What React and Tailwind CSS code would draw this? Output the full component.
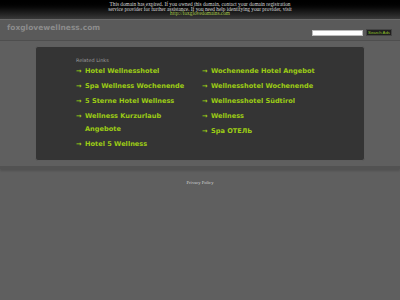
import React from "react";

const leftLinks = [
  ["Hotel Wellnesshotel"],
  ["Spa Wellness Wochenende"],
  ["5 Sterne Hotel Wellness"],
  ["Wellness Kurzurlaub", "Angebote"],
  ["Hotel 5 Wellness"],
];

const rightLinks = [
  ["Wochenende Hotel Angebot"],
  ["Wellnesshotel Wochenende"],
  ["Wellnesshotel Südtirol"],
  ["Wellness"],
  ["Spa ОТЕЛЬ"],
];

const LinkItem = ({ lines }) => (
  <div className="flex py-px leading-[13px]">
    <span className="w-[9px] shrink-0">→</span>
    <span>
      {lines.map((l, i) => (
        <div key={i}>{l}</div>
      ))}
    </span>
  </div>
);

const App = () => {
  return (
    <div className="w-[400px] h-[300px] overflow-hidden bg-[#5f5f5f] font-['DejaVu_Sans',sans-serif]">
      {/* expired notice */}
      <div className="h-[20px] bg-gradient-to-b from-[#000000] via-[#111111] to-[#3a3a3a] border-b border-[#6a6a6a] pt-[2px] text-center font-['Liberation_Serif',serif] text-[5.3px] leading-[4.7px] text-[#d8d8d8]">
        <div>This domain has expired. If you owned this domain, contact your domain registration</div>
        <div>service provider for further assistance. If you need help identifying your provider, visit</div>
        <div className="text-[#a8c84a]">http://foxglovedomains.com</div>
      </div>

      {/* header */}
      <div className="h-[21px] bg-[#5a5a5a] border-b border-[#4e4e4e] flex items-center justify-between pl-[7px] pr-[8px]">
        <div className="text-[7.5px] font-bold text-[#8c8c8c] -mt-[4px]">foxglovewellness.com</div>
        <div className="flex items-center gap-[3px] mt-[5px]">
          <div className="w-[51px] h-[6px] bg-white border border-[#bbbbbb]"></div>
          <div className="h-[7px] px-[1px] bg-[#1e1e1e] border border-[#444] text-[#8fc02a] text-[4.3px] leading-[5px] font-['Liberation_Sans',sans-serif]">
            Search Ads
          </div>
        </div>
      </div>

      {/* main */}
      <div className="pt-[5px] pb-[5px] border-b-[3px] border-[#525252] shadow-[0_2px_2px_rgba(0,0,0,0.15)]">
        <div className="mx-[35px] h-[115px] rounded-[3px] bg-[#343434] border border-[#5e5e5e] pt-[10px] pl-[40px]">
          <div className="text-[4.9px] leading-[6px] text-[#9a9a9a] mb-[1px]">Related Links</div>
          <div className="flex text-[6.6px] font-bold text-[#9ccc14]">
            <div className="w-[126px]">
              {leftLinks.map((l, i) => (
                <LinkItem key={i} lines={l} />
              ))}
            </div>
            <div>
              {rightLinks.map((l, i) => (
                <LinkItem key={i} lines={l} />
              ))}
            </div>
          </div>
        </div>
      </div>

      {/* footer */}
      <div className="pt-[11px] text-center font-['Liberation_Serif',serif] text-[4.6px] text-[#d0d0d0]">
        Privacy Policy
      </div>
    </div>
  );
};

export default App;
